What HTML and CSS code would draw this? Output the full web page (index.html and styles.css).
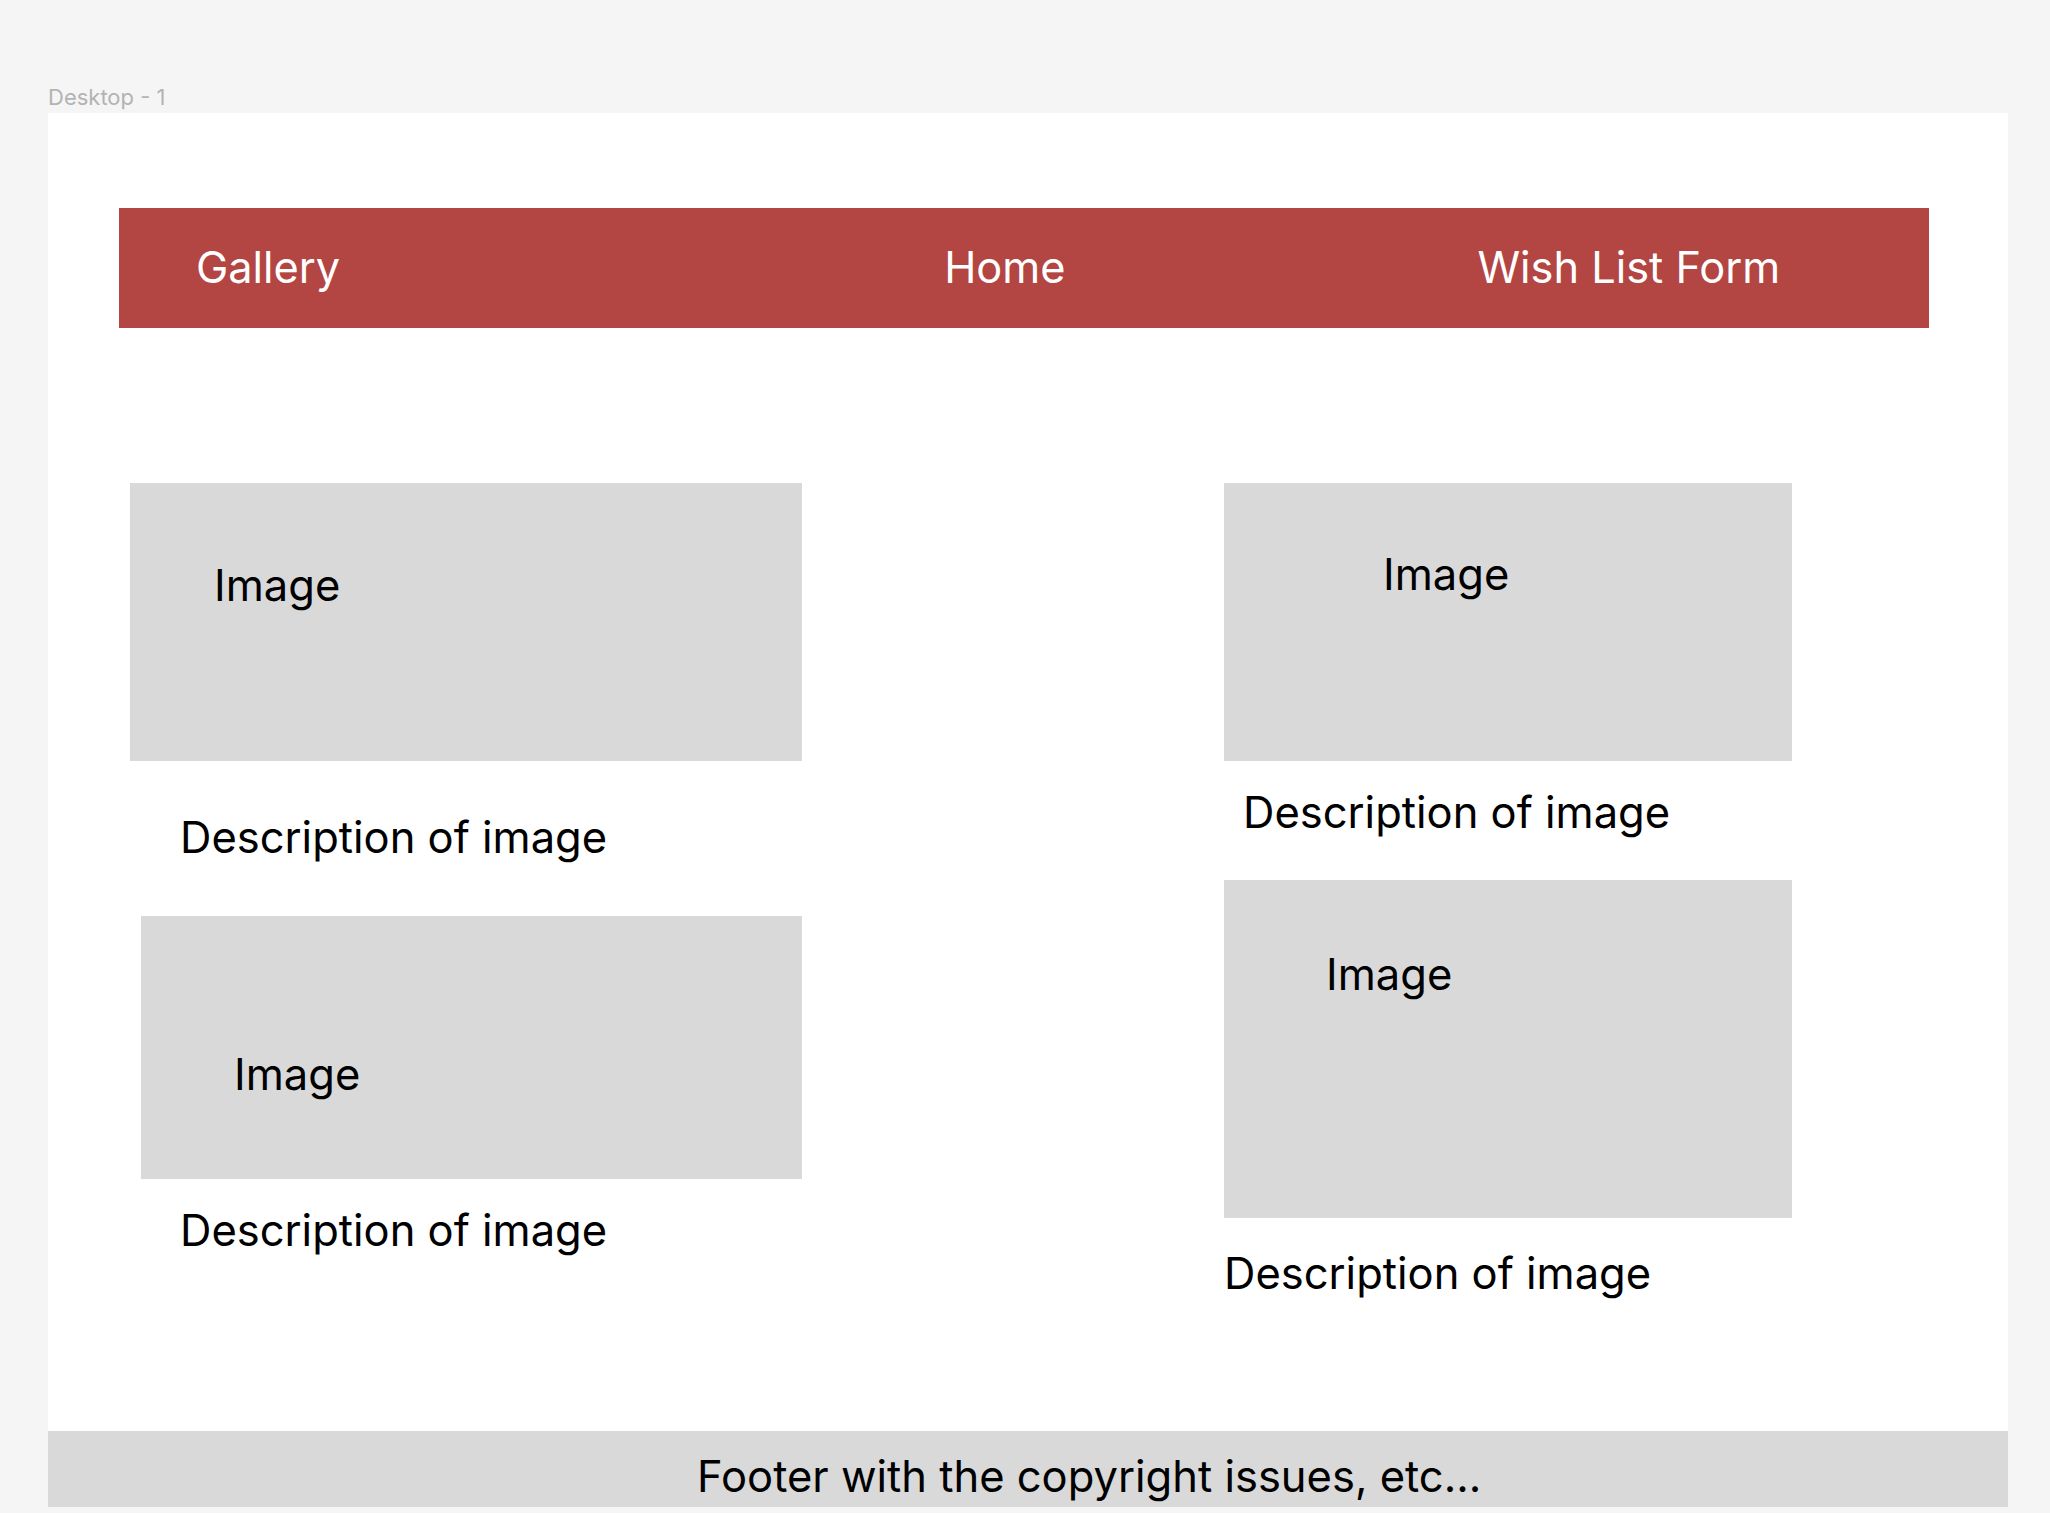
FILE: index.html
```html
<!DOCTYPE html>
<html lang="en">
<head>
<meta charset="utf-8">
<title>Desktop - 1</title>
<link rel="stylesheet" href="styles.css">
</head>
<body>
<div class="canvas">
  <div class="frame-label">Desktop - 1</div>
  <div class="frame">
    <nav class="nav">
      <a class="nav-item nav-gallery">Gallery</a>
      <a class="nav-item nav-home">Home</a>
      <a class="nav-item nav-wish">Wish List Form</a>
    </nav>
    <main class="gallery">
      <div class="col col-left">
        <div class="img-box box1"><span class="img-label">Image</span></div>
        <p class="desc desc1">Description of image</p>
        <div class="img-box box3"><span class="img-label">Image</span></div>
        <p class="desc desc3">Description of image</p>
      </div>
      <div class="col col-right">
        <div class="img-box box2"><span class="img-label">Image</span></div>
        <p class="desc desc2">Description of image</p>
        <div class="img-box box4"><span class="img-label">Image</span></div>
        <p class="desc desc4">Description of image</p>
      </div>
    </main>
    <footer class="footer">Footer with the copyright issues, etc...</footer>
  </div>
</div>
</body>
</html>
```

FILE: styles.css
```css
* { box-sizing: border-box; }
html, body {
  margin: 0;
  padding: 0;
  background: #f5f5f5;
  font-family: Inter, "Noto Sans", "Liberation Sans", sans-serif;
}
.canvas {
  padding: 86px 42px 0 48px;
  height: 1513px;
  overflow: hidden;
}
.frame-label {
  font-size: 22px;
  line-height: 1;
  color: #b3b3b3;
  margin: 0 0 5px 0;
  height: 22px;
}
.frame {
  width: 1960px;
  height: 1394px;
  background: #ffffff;
  display: flex;
  flex-direction: column;
}
.nav {
  margin: 95px 0 0 71px;
  width: 1810px;
  height: 120px;
  background: #b34542;
  display: flex;
  align-items: center;
  padding-left: 77px;
}
.nav-item {
  color: #ffffff;
  font-size: 43.3px;
  line-height: 1;
  text-decoration: none;
}
.nav-home { margin-left: 604px; }
.nav-wish { margin-left: 412px; }

.gallery {
  flex: 1;
  display: flex;
  padding-top: 155px;
}
.col {
  display: flex;
  flex-direction: column;
  align-items: flex-start;
}
.col-left { margin-left: 82px; width: 672px; }
.col-right { margin-left: 422px; width: 568px; }

.img-box {
  background: #d9d9d9;
}
.img-label {
  display: block;
  font-size: 43.5px;
  line-height: 1;
  color: #000;
}
.desc {
  margin: 0;
  font-size: 43.5px;
  line-height: 1;
  color: #000;
  white-space: nowrap;
}
.box1 { width: 672px; height: 278px; padding: 81px 0 0 84px; }
.desc1 { margin: 55px 0 0 50px; }
.box3 { width: 661px; height: 263px; margin: 56.5px 0 0 11px; padding: 137px 0 0 93px; }
.desc3 { margin: 30px 0 0 50px; }

.box2 { width: 568px; height: 278px; padding: 70px 0 0 159px; }
.desc2 { margin: 30px 0 0 19px; }
.box4 { width: 568px; height: 338px; margin: 45px 0 0 0; padding: 73px 0 0 102px; }
.desc4 { margin: 34px 0 0 0; }

.footer {
  height: 76px;
  background: #d9d9d9;
  font-size: 43.5px;
  line-height: 1;
  color: #000;
  padding: 24px 0 0 649px;
  white-space: nowrap;
}
```
